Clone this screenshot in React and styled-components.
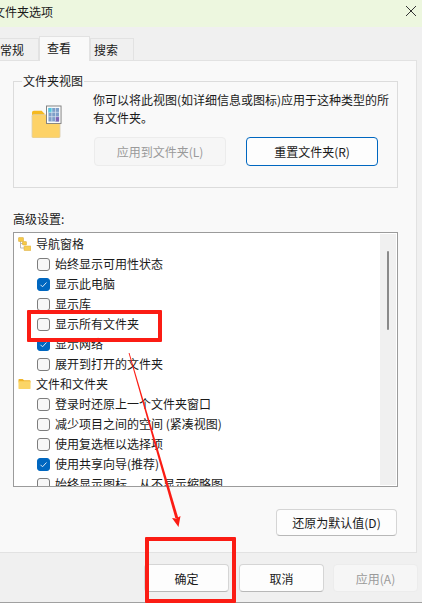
import React from 'react';
import styled, { createGlobalStyle } from 'styled-components';

const Global = createGlobalStyle`
  html, body { margin: 0; padding: 0; background: #f0f0f0; }
  body { font-family: "Noto Sans CJK SC", "Noto Sans", sans-serif; font-size: 12px; color: #1a1a1a; }
`;

const Dialog = styled.div`
  position: relative;
  width: 422px;
  height: 603px;
  overflow: hidden;
  background: #f0f0f0;
  display: flex;
  flex-direction: column;
`;

const TitleBar = styled.div`
  height: 27px;
  flex: none;
  box-sizing: border-box;
  background: #edf7df;
  display: flex;
  align-items: center;
  justify-content: space-between;
  padding: 0 5px 5px 0;
  font-size: 12px;
  span { margin-left: -7px; }
`;

const CloseIcon = styled.svg`
  width: 12px;
  height: 12px;
`;

const Tabs = styled.div`
  height: 33px;
  flex: none;
  display: flex;
  align-items: flex-end;
`;

const Tab = styled.div`
  height: ${p => (p.$active ? '25px' : '22px')};
  width: ${p => p.$w}px;
  margin-left: ${p => p.$ml || 0}px;
  box-sizing: border-box;
  background: ${p => (p.$active ? '#f9f9f9' : '#f0f0f0')};
  border: 1px solid #e2e2e2;
  border-bottom: none;
  display: flex;
  align-items: center;
  justify-content: ${p => (p.$active ? 'center' : 'flex-end')};
  padding: ${p => (p.$active ? '0 11px 3px 0' : `0 ${p.$pr}px 0 0`)};
  position: relative;
  z-index: ${p => (p.$active ? 1 : 0)};
  margin-bottom: ${p => (p.$active ? '-1px' : 0)};
`;

const Panel = styled.div`
  width: 427px;
  margin-left: -10px;
  height: 493px;
  flex: none;
  box-sizing: border-box;
  background: #f9f9f9;
  border: 1px solid #e2e2e2;
  padding: 13px 0 0 22px;
`;

const Group = styled.fieldset`
  width: 385px;
  height: 114px;
  margin: 0;
  padding: 0;
  box-sizing: border-box;
  border: 1px solid #dcdcdc;
  min-width: 0;
  display: flex;
`;

const GroupTitle = styled.legend`
  margin-left: 8px;
  padding: 0 1px;
  font-size: 12px;
  line-height: 14px;
`;

const GroupBody = styled.div`
  display: flex;
  padding: 0 0 0 17px;
`;

const FolderIcon = styled.svg`
  width: 31px;
  height: 33px;
  margin: 17px 31px 0 0;
  flex: none;
`;

const GroupText = styled.div`
  width: 300px;
  padding-top: 3px;
`;

const Paragraph = styled.p`
  margin: 0;
  line-height: 18px;
  font-size: 12px;
  white-space: pre-line;
`;

const ButtonRow = styled.div`
  display: flex;
  gap: 20px;
  margin: 10px 0 0 1px;
`;

const Button = styled.div`
  box-sizing: border-box;
  width: ${p => p.$w}px;
  height: ${p => p.$h || 29}px;
  margin-right: ${p => p.$mr || 0}px;
  flex: none;
  display: flex;
  align-items: center;
  justify-content: center;
  background: ${p => (p.$disabled ? '#f6f6f6' : '#fdfdfd')};
  color: ${p => (p.$disabled ? '#9a9a9a' : '#1a1a1a')};
  border: 1px solid ${p => (p.$primary ? '#0067c0' : p.$disabled ? '#ececec' : '#d5d5d5')};
  border-bottom-color: ${p => (p.$primary ? '#0067c0' : p.$disabled ? '#ececec' : '#b8b8b8')};
  border-radius: 4px;
  font-size: 12px;
`;

const AdvancedLabel = styled.div`
  margin-top: 22px;
  height: 22px;
  line-height: 18px;
`;

const ListBox = styled.div`
  width: 385px;
  height: 255px;
  box-sizing: border-box;
  border: 1px solid #9b9b9b;
  background: #fff;
  display: flex;
  overflow: hidden;
`;

const Rows = styled.div`
  flex: 1;
  padding-top: 1px;
`;

const Row = styled.div`
  height: 20px;
  display: flex;
  align-items: center;
  padding-left: ${p => (p.$heading ? '4px' : '23px')};
  gap: 5px;
  white-space: nowrap;
  line-height: 20px;
`;

const Check = styled.span`
  box-sizing: border-box;
  width: 13px;
  height: 13px;
  flex: none;
  border-radius: 3px;
  background: ${p => (p.$on ? '#0067c0' : '#f7f7f7')};
  border: 1px solid ${p => (p.$on ? '#0067c0' : '#7d7d7d')};
  display: flex;
  align-items: center;
  justify-content: center;
`;

const RowIcon = styled.svg`
  flex: none;
`;

const Scrollbar = styled.div`
  width: 16px;
  flex: none;
  margin: 1px 1px 1px 0;
  background: #f0f0f0;
  padding: 17px 0 0 7px;
  box-sizing: border-box;
`;

const Thumb = styled.div`
  width: 2px;
  height: 79px;
  background: #8a8a8a;
  border-radius: 1px;
`;

const ResetRow = styled.div`
  width: 384px;
  display: flex;
  justify-content: flex-end;
  margin-top: 22px;
`;

const Footer = styled.div`
  flex: 1;
  display: flex;
  justify-content: flex-end;
  gap: 9px;
  padding: 11px 4px 0 0;
  box-sizing: border-box;
  border-bottom: 1px solid #a0a0a0;
`;

const Annotation = styled.div`
  position: absolute;
  box-sizing: border-box;
  left: ${p => p.$x}px;
  top: ${p => p.$y}px;
  width: ${p => p.$w}px;
  height: ${p => p.$h}px;
  border: 4px solid #fb1c14;
  border-radius: 1px;
`;

const ArrowLayer = styled.svg`
  position: absolute;
  left: 0;
  top: 0;
  width: 422px;
  height: 603px;
  pointer-events: none;
`;

const TreeIcon = () => (
  <RowIcon width="13" height="14" viewBox="0 0 13 14">
    <path d="M2.5 3v8h5M2.5 6.500h3" stroke="#b9b9b9" fill="none" />
    <rect x="0.500" y="0.500" width="5" height="4" rx=".5" fill="#f5c947" stroke="#d9a93a" strokeWidth=".5" />
    <rect x="4.500" y="4.500" width="4" height="3.500" rx=".5" fill="#f5c947" stroke="#d9a93a" strokeWidth=".5" />
    <rect x="6" y="9" width="7" height="4.500" rx=".5" fill="#f7cf55" stroke="#d9a93a" strokeWidth=".5" />
  </RowIcon>
);

const SmallFolder = () => (
  <RowIcon width="13" height="12" viewBox="0 0 14 12">
    <path d="M.5 1.500a1 1 0 0 1 1-1h3.500l1.500 1.500h6a1 1 0 0 1 1 1V4H.5z" fill="#f0b429" />
    <rect x=".5" y="3" width="13" height="8.500" rx="1" fill="#fbd566" />
  </RowIcon>
);

const CheckMark = () => (
  <svg width="9" height="9" viewBox="0 0 9 9">
    <path d="M1.500 4.800l2 2 4-4.300" stroke="#dbe9f7" strokeWidth="1" fill="none" />
  </svg>
);

const items = [
  { heading: 'tree', label: '导航窗格' },
  { label: '始终显示可用性状态' },
  { label: '显示此电脑', on: true },
  { label: '显示库' },
  { label: '显示所有文件夹' },
  { label: '显示网络', on: true },
  { label: '展开到打开的文件夹' },
  { heading: 'folder', label: '文件和文件夹' },
  { label: '登录时还原上一个文件夹窗口' },
  { label: '减少项目之间的空间 (紧凑视图)' },
  { label: '使用复选框以选择项' },
  { label: '使用共享向导(推荐)', on: true },
  { label: '始终显示图标，从不显示缩略图' },
];

export default function App() {
  return (
    <Dialog>
      <Global />
      <TitleBar>
        <span>文件夹选项</span>
        <CloseIcon viewBox="0 0 12 12">
          <path d="M1 1l10 10M11 1L1 11" stroke="#333" strokeWidth="1" />
        </CloseIcon>
      </TitleBar>

      <Tabs>
        <Tab $w={49} $ml={-10} $pr={14}>常规</Tab>
        <Tab $w={51} $active>查看</Tab>
        <Tab $w={44} $pr={15}>搜索</Tab>
      </Tabs>

      <Panel>
        <Group>
          <GroupTitle>文件夹视图</GroupTitle>
          <GroupBody>
            <FolderIcon viewBox="0 0 32 34">
              <path d="M1 8a2 2 0 0 1 2-2h8l3 3v4H1z" fill="#f5b91f" />
              <rect x="1" y="10" width="29" height="24" rx="1.500" fill="#fdd267" stroke="#d9d2bd" strokeWidth=".8" />
              <rect x="16" y="1" width="15" height="18" fill="#fff" stroke="#808080" strokeWidth="1" />
              <rect x="18" y="3" width="11" height="14" fill="#7f9fc9" />
              <path d="M18 3h4v5h-4z" fill="#4fc5dd" />
              <path d="M25 12h4v5h-4z" fill="#7d64b5" />
              <path d="M21.500 3v14M25.300 3v14M18 7.500h11M18 12h11" stroke="#dfe7f1" strokeWidth=".7" />
            </FolderIcon>
            <GroupText>
              <Paragraph>{'你可以将此视图(如详细信息或图标)应用于这种类型的所\n有文件夹。'}</Paragraph>
              <ButtonRow>
                <Button $w={132} $disabled>应用到文件夹(L)</Button>
                <Button $w={132} $primary>重置文件夹(R)</Button>
              </ButtonRow>
            </GroupText>
          </GroupBody>
        </Group>

        <AdvancedLabel>高级设置:</AdvancedLabel>
        <ListBox>
          <Rows>
            {items.map(item => (
              <Row key={item.label} $heading={!!item.heading}>
                {item.heading === 'tree' && <TreeIcon />}
                {item.heading === 'folder' && <SmallFolder />}
                {!item.heading && <Check $on={item.on}>{item.on && <CheckMark />}</Check>}
                {item.label}
              </Row>
            ))}
          </Rows>
          <Scrollbar><Thumb /></Scrollbar>
        </ListBox>

        <ResetRow>
          <Button $w={121} $h={27}>还原为默认值(D)</Button>
        </ResetRow>
      </Panel>

      <Footer>
        <Button $w={85} $h={28} $mr={1}>确定</Button>
        <Button $w={85} $h={28}>取消</Button>
        <Button $w={85} $h={28} $disabled>应用(A)</Button>
      </Footer>

      <Annotation $x={27} $y={310} $w={135} $h={32} />
      <Annotation $x={145} $y={537} $w={91} $h={66} />
      <ArrowLayer viewBox="0 0 422 603">
        <path d="M128.600 353L129.500 353L178.300 518L175.300 518Z" fill="#fb1c14" />
        <path d="M178.500 527L172 518L176 518.500L180.500 516Z" fill="#fb1c14" />
      </ArrowLayer>
    </Dialog>
  );
}
